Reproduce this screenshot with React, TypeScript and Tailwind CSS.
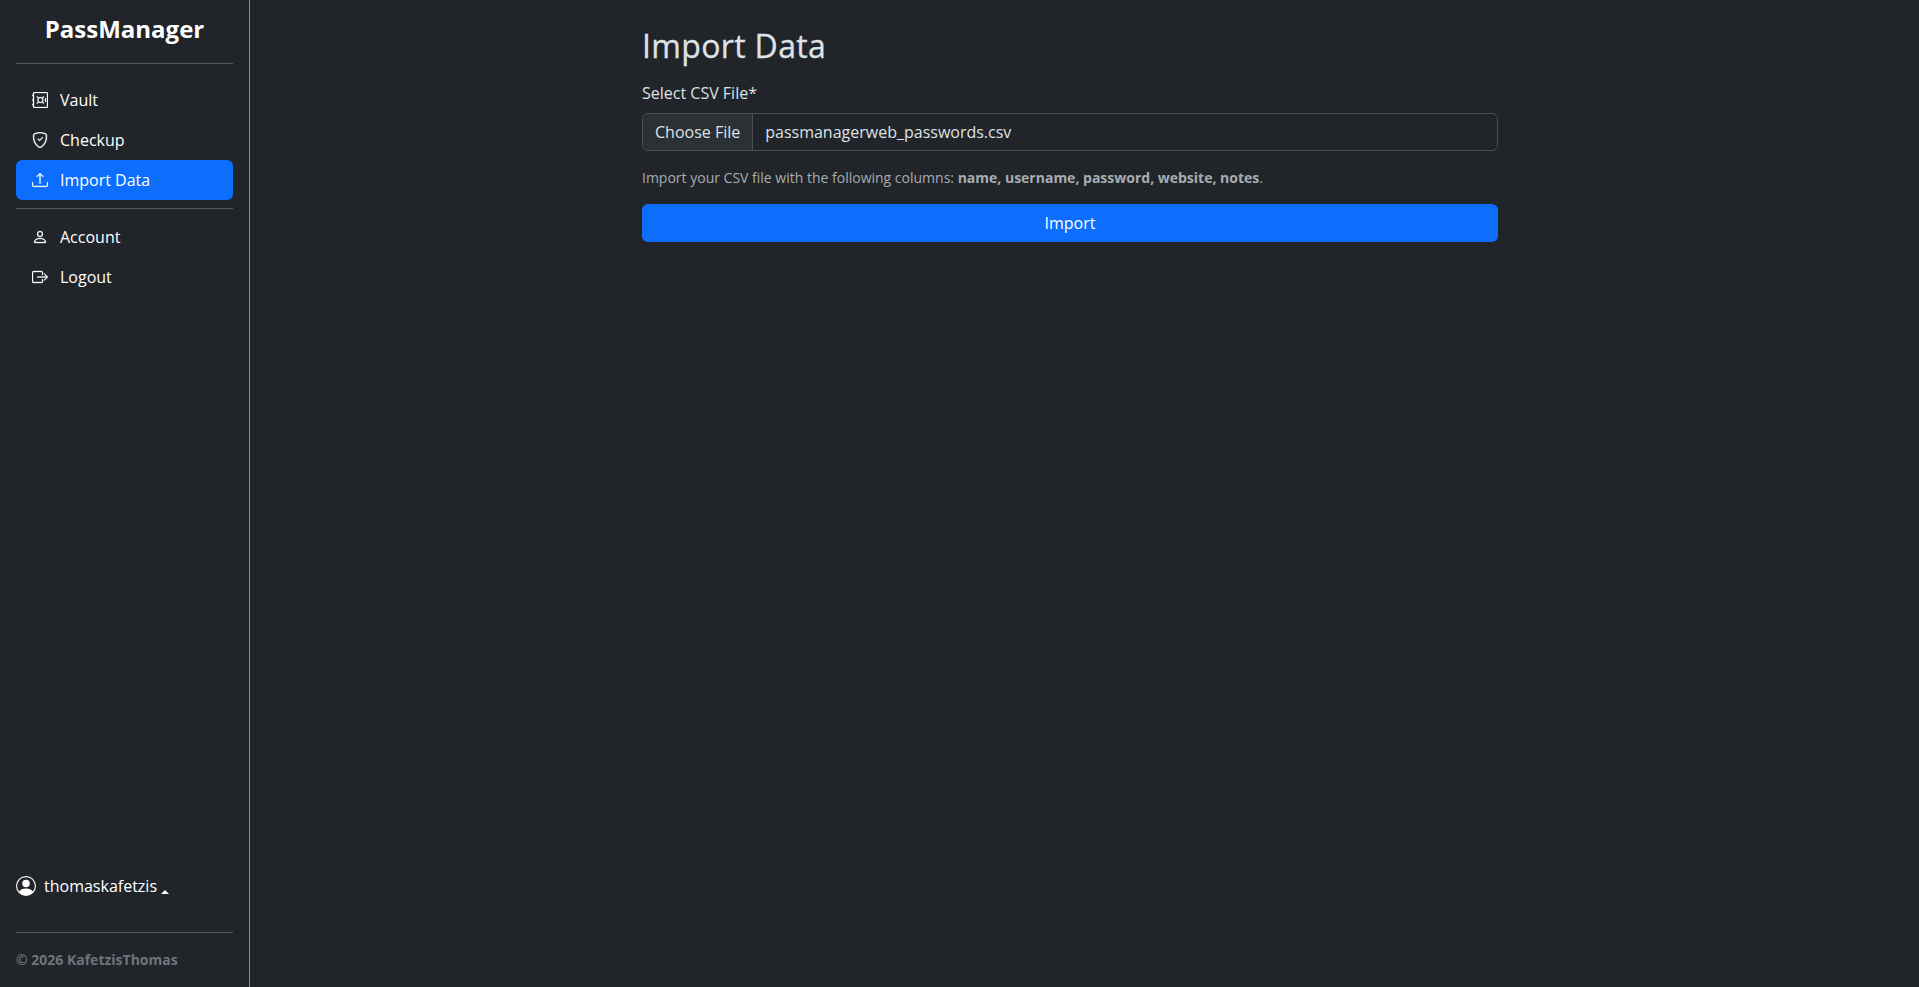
import { BsBoxArrowRight, BsPerson, BsPersonCircle, BsSafe, BsShieldCheck, BsUpload } from 'react-icons/bs';

const font = { fontFamily: '"Open Sans", sans-serif' };

function NavLink({ icon, label, active }: { icon: React.ReactNode; label: string; active?: boolean }) {
    return (
        <a href="#" className={`flex h-10 items-center gap-3 rounded-md px-4 text-white ${active ? 'bg-[#0d6efd]' : ''}`}>
            <span className="flex w-4 justify-center text-[16px] [&_svg]:stroke-current [&_svg]:stroke-[0.3]">{icon}</span>
            {label}
        </a>
    );
}

export default function App() {
    return (
        <div className="flex h-[987px] bg-[#212529] text-[16px] leading-6 text-[#dee2e6]" style={font}>
            <aside className="flex w-[250px] shrink-0 flex-col border-r border-[#8b8e92] px-4 pb-[16px]">
                <h1 className="mt-[14px] text-center text-2xl leading-[29px] font-bold text-white">PassManager</h1>
                <hr className="mt-[20px] mb-4 border-[#55585c]" />
                <NavLink icon={<BsSafe />} label="Vault" />
                <NavLink icon={<BsShieldCheck />} label="Checkup" />
                <NavLink icon={<BsUpload />} label="Import Data" active />
                <hr className="mt-2 mb-2 border-[#55585c]" />
                <NavLink icon={<BsPerson />} label="Account" />
                <NavLink icon={<BsBoxArrowRight />} label="Logout" />
                <div className="mt-auto flex items-center text-white">
                    <BsPersonCircle className="mr-2 text-[20px]" />
                    <span>thomaskafetzis</span>
                    <span className="mt-3 ml-1 h-0 w-0 border-x-[4px] border-b-[4px] border-x-transparent border-b-white" />
                </div>
                <hr className="mt-[34px] mb-4 border-[#55585c]" />
                <p className="mb-[1px] text-sm leading-[21px] font-bold text-[#6c757d]">© 2026 KafetzisThomas</p>
            </aside>
            <main className="flex-1 pt-[27px] pl-[392px]">
                <div className="w-[856px]">
                    <h2 className="text-[32px] leading-[38px] font-medium tracking-[0.34px] [-webkit-text-stroke:0.3px_#dee2e6]">Import Data</h2>
                    <label className="mt-[16px] mb-2 block">Select CSV File*</label>
                    <div className="flex h-[38px] items-center rounded-md border border-[#495057]">
                        <span className="flex h-full items-center rounded-l-md border-r border-[#495057] bg-[#2b3035] px-3">Choose File</span>
                        <span className="px-3">passmanagerweb_passwords.csv</span>
                    </div>
                    <p className="mt-[16px] text-sm leading-[21px] text-[#a7acb1]">
                        Import your CSV file with the following columns: <strong>name, username, password, website, notes</strong>.
                    </p>
                    <button className="mt-[16px] h-[38px] w-full rounded-md bg-[#0d6efd] text-white">Import</button>
                </div>
            </main>
        </div>
    );
}
